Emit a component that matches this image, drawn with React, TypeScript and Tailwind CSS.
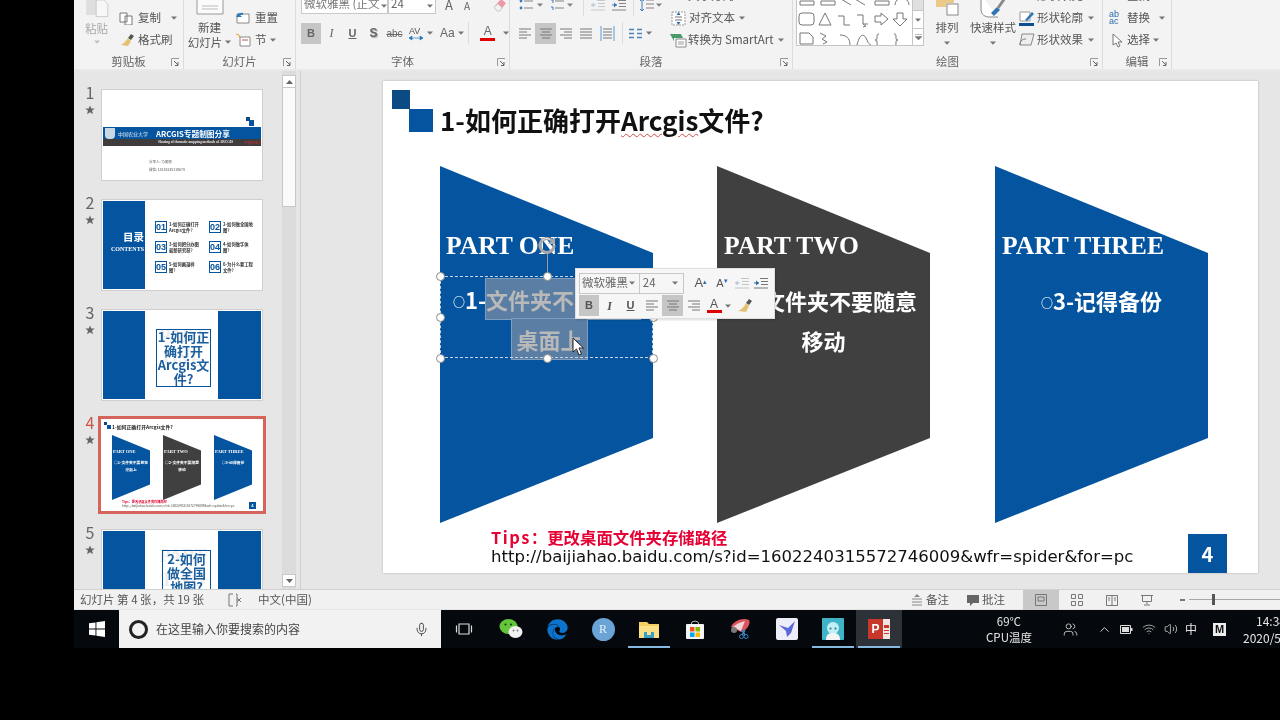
import React from "react";
import { Mic, Volume2, Wifi, ChevronUp, Users } from "lucide-react";
import { FaEdge } from "react-icons/fa";

const Caret = ({ className = "" }: { className?: string }) => (
  <svg width="6" height="4" viewBox="0 0 6 4" className={"shrink-0 " + className}><path d="M0 0.5h6L3 3.8z" fill="#777" /></svg>
);

const Expander = () => (
  <svg width="9" height="9" viewBox="0 0 9 9" className="absolute right-[3px] bottom-[2px]"><path d="M0.5 8V.5H8" fill="none" stroke="#999" /><path d="M3 3l4 4M7 4v3.5H4" fill="none" stroke="#666" /></svg>
);

const Group = ({ w, label, children }: { w: string; label: string; children: React.ReactNode }) => (
  <div className={"relative h-[69px] flex flex-col shrink-0 border-r border-[#dcdcdc] " + w}>
    <div className="h-[54px] flex items-end">{children}</div>
    <div className="h-[15px] leading-[14px] text-center text-[11.5px] text-[#666]">{label}</div>
    <Expander />
  </div>
);

const Row = ({ children, className = "" }: { children: React.ReactNode; className?: string }) => (
  <div className={"h-[22px] flex items-center text-[11.5px] text-[#555] whitespace-nowrap " + className}>{children}</div>
);

const Cell = ({ children, on, w = "w-[21px]" }: { children: React.ReactNode; on?: boolean; w?: string }) => (
  <div className={"h-[21px] flex items-center justify-center shrink-0 " + w + (on ? " bg-[#c6c6c6]" : "")}>{children}</div>
);

const Div = () => <div className="w-px h-[22px] bg-[#dcdcdc] mx-[4px] shrink-0" />;

const Lines = ({ kind }: { kind: "l" | "c" | "r" | "j" }) => {
  const rows = kind === "l" ? ["M1 2h12", "M1 5h8", "M1 8h12", "M1 11h8"] : kind === "c" ? ["M1 2h12", "M3 5h8", "M1 8h12", "M3 11h8"] : kind === "r" ? ["M1 2h12", "M5 5h8", "M1 8h12", "M5 11h8"] : ["M1 2h12", "M1 5h12", "M1 8h12", "M1 11h12"];
  return <svg width="14" height="13" viewBox="0 0 14 13"><path d={rows.join("")} stroke="#777" fill="none" /></svg>;
};

const Indent = ({ dir, blue }: { dir: "in" | "out"; blue?: boolean }) => (
  <svg width="16" height="13" viewBox="0 0 16 13">
    <path d="M7 1.5h8M8 4.5h7M8 7.5h7M1 11h14" stroke={blue ? "#777" : "#c4c4c4"} fill="none" />
    <path d={dir === "out" ? "M1 6l3-2.5v5z" : "M6 6L3 3.5v5z"} fill={blue ? "#2b6cb0" : "#b9c8d8"} />
    <path d="M1 6h5" stroke={blue ? "#2b6cb0" : "#b9c8d8"} />
  </svg>
);

const Ribbon = () => (
  <div className="h-[71px] bg-[#f3f3f3] flex shrink-0 overflow-hidden border-b-2 border-[#e9e9e9]">
    <Group w="w-[110px]" label="剪贴板">
      <div className="w-[45px] h-[54px] flex flex-col items-center justify-end pb-[6px]">
        <svg width="28" height="24" viewBox="0 0 28 24"><rect x="1" y="0" width="15" height="18" fill="#dedede" /><path d="M13 0h9l5 5v15H13z" fill="#f7f7f7" stroke="#c4c4c4" /></svg>
        <div className="text-[11.5px] text-[#a8a8a8] h-[17px] leading-[17px]">粘贴</div>
        <Caret className="opacity-40 mt-[3px] mb-[4px]" />
      </div>
      <div className="flex flex-col pb-[3px]">
        <Row>
          <svg width="14" height="13" viewBox="0 0 14 13" className="mr-[5px]"><path d="M1 1h7v9H1zM6 4h7v9H6z" fill="#fff" stroke="#777" /></svg>
          <span>复制</span><Caret className="ml-[10px]" />
        </Row>
        <Row>
          <svg width="16" height="14" viewBox="0 0 16 14" className="mr-[3px]"><path d="M9 5l3-4 3 2-3 4z" fill="#555" /><path d="M9 5l3 3-3 5-7-1c3-2 5-4 7-7z" fill="#e4c074" /></svg>
          <span>格式刷</span>
        </Row>
      </div>
    </Group>
    <Group w="w-[112px]" label="幻灯片">
      <div className="w-[51px] flex flex-col items-center pb-[2px]">
        <svg width="28" height="15" viewBox="0 0 28 15"><path d="M1 0v14h26V0" fill="#fbfbfb" stroke="#999" /><path d="M6 6h16M6 9h16" stroke="#bbb" /></svg>
        <div className="text-[11.5px] text-[#555] leading-[14px] mt-[5px] text-center">新建</div>
        <div className="text-[11.5px] text-[#555] leading-[14px] flex items-center mt-[1px]">幻灯片<Caret className="ml-[3px]" /></div>
        <div className="h-[3px]" />
      </div>
      <div className="flex flex-col pb-[3px] pl-[1px]">
        <Row>
          <svg width="15" height="14" viewBox="0 0 15 14" className="mr-[4px]"><path d="M1 3h12v9H1z" fill="#fff" stroke="#888" /><path d="M1 6a5 5 0 0 1 6-3" stroke="#2b7bb9" strokeWidth="2" fill="none" /><path d="M2 2v4h4z" fill="#2b7bb9" /></svg>
          <span>重置</span>
        </Row>
        <Row>
          <svg width="15" height="14" viewBox="0 0 15 14" className="mr-[4px]"><path d="M4 4h10v9H4z" fill="#fff" stroke="#888" /><path d="M6 7h6" stroke="#c0504d" /><path d="M0 1l3 1 1 3" stroke="#e9a23b" fill="none" /></svg>
          <span>节</span><Caret className="ml-[3px]" />
        </Row>
      </div>
    </Group>
    <Group w="w-[214px]" label="字体">
      <div className="flex flex-col pl-[5px] pb-[10px] w-full">
        <div className="h-[24px] flex items-end mb-[8px]">
          <div className="w-[87px] h-[24px] bg-white border border-[#c8c8c8] flex items-end px-[2px] pb-[1px] text-[11.5px] text-[#777] whitespace-nowrap overflow-hidden">微软雅黑 (正文<Caret className="ml-[2px] mb-[4px]" /></div>
          <div className="w-[48px] h-[24px] bg-white border border-[#c8c8c8] flex items-end justify-between px-[2px] pb-[1px] text-[11.5px] text-[#666]">24<Caret className="mb-[4px]" /></div>
          <span className="ml-[9px] mb-[2px] text-[13px] leading-[14px] text-[#666]">A</span>
          <span className="ml-[11px] mb-[2px] text-[10px] leading-[12px] text-[#666]">A</span>
          <svg width="14" height="14" viewBox="0 0 14 14" className="ml-[23px] mb-[2px]"><path d="M1 9l7-8 5 4-6 8H4z" fill="#ec9aa8" /><path d="M1 9l3 4h3l2-3-4-4z" fill="#f2f2f2" stroke="#ccc" /></svg>
        </div>
        <div className="h-[22px] flex items-center text-[#666]">
          <Cell on w="w-[20px]"><span className="text-[11px] font-bold font-['Liberation_Sans',sans-serif]">B</span></Cell>
          <Cell><span className="text-[12px] italic font-['Liberation_Serif',serif]">I</span></Cell>
          <Cell><span className="text-[11px] underline font-bold font-['Liberation_Sans',sans-serif]">U</span></Cell>
          <Cell><span className="text-[12px] font-bold [text-shadow:1px_1px_1px_#aaa] font-['Liberation_Sans',sans-serif]">S</span></Cell>
          <Cell><span className="text-[10px] line-through font-['Liberation_Sans',sans-serif]">abc</span></Cell>
          <Cell>
            <svg width="16" height="15" viewBox="0 0 16 15"><text x="1" y="8" fontSize="9" fill="#555" fontFamily="Liberation Sans">AV</text><path d="M1 12h14M1 12l3-2v4zM15 12l-3-2v4z" stroke="#2b7bb9" fill="#2b7bb9" strokeWidth="0.7" /></svg>
          </Cell>
          <Caret className="ml-[1px]" />
          <span className="ml-[7px] text-[12px] font-['Liberation_Sans',sans-serif]">Aa</span>
          <Caret className="ml-[3px]" />
          <Div />
          <div className="ml-[7px] flex flex-col items-center w-[16px]">
            <span className="text-[12px] leading-[11px] font-['Liberation_Sans',sans-serif]">A</span>
            <div className="w-[15px] h-[3px] bg-[#e00000] mt-[1px]" />
          </div>
          <Caret className="ml-[7px]" />
        </div>
      </div>
    </Group>
    <Group w="w-[283px]" label="段落">
      <div className="flex w-full items-end">
        <div className="w-[160px] pl-[5px] pb-[10px] flex flex-col shrink-0">
          <div className="h-[22px] flex items-center mb-[6px] opacity-90">
            <Cell><svg width="14" height="12" viewBox="0 0 14 12"><path d="M5 2h9M5 9h9" stroke="#777" /><circle cx="2" cy="2" r="1.4" fill="#2b6cb0" /><circle cx="2" cy="9" r="1.4" fill="#2b6cb0" /></svg></Cell>
            <Caret className="ml-[1px] mr-[5px]" />
            <Cell w="w-[18px]"><svg width="14" height="12" viewBox="0 0 14 12"><path d="M5 2h9M5 9h9" stroke="#777" /><path d="M1 1h2v3M1 8h2v3" stroke="#2b6cb0" fill="none" /></svg></Cell>
            <Caret className="ml-[1px] mr-[6px]" />
            <Div />
            <Cell w="w-[20px]"><Indent dir="out" /></Cell>
            <Cell w="w-[21px]"><Indent dir="in" blue /></Cell>
            <Div />
            <Cell w="w-[17px]"><svg width="14" height="15" viewBox="0 0 14 15"><path d="M6 2h8M6 6h8M6 10h8" stroke="#777" /><path d="M2 1v12M0 3l2-2 2 2M0 11l2 2 2-2" stroke="#2b6cb0" fill="none" /></svg></Cell>
            <Caret className="ml-[1px]" />
          </div>
          <div className="h-[22px] flex items-center">
            <Cell w="w-[20px]"><Lines kind="l" /></Cell>
            <Cell on><Lines kind="c" /></Cell>
            <Cell w="w-[20px]"><Lines kind="r" /></Cell>
            <Cell w="w-[20px]"><Lines kind="j" /></Cell>
            <Cell w="w-[22px]"><svg width="15" height="15" viewBox="0 0 15 15"><path d="M3 3h9M3 6h9M3 9h9M3 12h9" stroke="#777" /><path d="M1 0v15M14 0v15" stroke="#5b9bd5" /></svg></Cell>
            <Div />
            <Cell w="w-[17px]"><svg width="13" height="11" viewBox="0 0 13 11"><path d="M0 1.5h5M0 5.5h5M0 9.5h5M8 1.5h5M8 5.5h5M8 9.5h5" stroke="#4b82b8" strokeWidth="1.4" /></svg></Cell>
            <Caret className="ml-[2px]" />
          </div>
        </div>
        <div className="flex flex-col pb-[3px]">
          <Row><span className="ml-[18px]">文字方向</span></Row>
          <Row>
            <svg width="15" height="15" viewBox="0 0 15 15" className="mr-[3px] ml-[1px]"><path d="M1 1h13v13H1z" fill="#fff" stroke="#999" strokeDasharray="2 1" /><path d="M4 6h7M4 9h7" stroke="#777" /><path d="M7.500 1l-2 3h4zM7.500 14l-2-3h4z" fill="#2b6cb0" /></svg>
            <span>对齐文本</span><Caret className="ml-[4px]" />
          </Row>
          <Row>
            <svg width="17" height="15" viewBox="0 0 17 15" className="mr-[1px]"><path d="M0 1h11l2 4H4v3z" fill="#4a9a6a" /><path d="M6 6h10v8H6z" fill="#fff" stroke="#888" /><path d="M8 9h6M8 11h6" stroke="#999" /></svg>
            <span>转换为 SmartArt</span><Caret className="ml-[4px]" />
          </Row>
        </div>
      </div>
    </Group>
    <Group w="w-[310px]" label="绘图">
      <div className="flex w-full items-end">
        <div className="ml-[3px] mb-[8px] w-[128px] h-[60px] flex bg-white border border-[#c6c6c6] shrink-0">
          <svg width="115" height="58" viewBox="0 0 115 58" fill="none" stroke="#777">
            <g transform="translate(0 6)">
              <path d="M3 8h14v4H3zM24 8h14v4H24zM44 6l10 6M58 6l10 6M78 8h14v4H78zM98 12a6 6 0 0 1 14 0" />
              <rect x="2" y="20" width="15" height="12" rx="3" />
              <path d="M28 20l6 12H22zM41 23h6v9h6M60 22h6v9h5M66 31l3 2-3 1M78 23h6v-3l7 6-7 6v-3h-6zM100 20h6v6h4l-7 7-7-7h4z" />
              <path d="M3 40h9l4 4v7H3zM23 40l6 3-4 3 5 3-4 2M43 42c6 0 10 3 10 10M60 52c3-12 7-12 10-5 1 3 2 4 4 5M82 41c-2 0-2 1-2 4 0 2-1 2-2 2 1 0 2 0 2 2 0 3 0 4 2 4M97 41c2 0 2 1 2 4 0 2 1 2 2 2-1 0-2 0-2 2 0 3 0 4-2 4" />
            </g>
          </svg>
          <div className="flex-1 flex flex-col border-l border-[#c6c6c6]">
            <div className="h-[23px] bg-[#e0e0e0]" />
            <div className="h-[19px] border-y border-[#c6c6c6] flex items-center justify-center"><Caret /></div>
            <div className="flex-1 flex items-center justify-center"><svg width="7" height="6" viewBox="0 0 7 6"><path d="M0 .5h7M0 2.5h7L3.500 6z" fill="#777" stroke="#777" strokeWidth=".5" /></svg></div>
          </div>
        </div>
        <div className="w-[46px] flex flex-col items-center shrink-0 pb-[6px]">
          <svg width="26" height="24" viewBox="0 0 26 24"><rect x="2" y="2" width="10" height="10" fill="#ecc987" /><rect x="11" y="0" width="9" height="8" fill="#ecc987" /><rect x="13" y="9" width="11" height="11" fill="#fff" stroke="#888" /></svg>
          <div className="text-[11.5px] text-[#555] leading-[14px] mt-[1px]">排列</div>
          <Caret className="mt-[7px] mb-[3px]" />
        </div>
        <div className="w-[46px] flex flex-col items-center shrink-0 pb-[6px]">
          <svg width="30" height="24" viewBox="0 0 30 24"><path d="M3 0v14c0 6 4 8 9 8h8" fill="#fff" stroke="#888" /><path d="M13 18l6-6 3 3-6 6z" fill="#2f74b5" /><path d="M19 12l7-10 2 2-7 10z" fill="#888" /></svg>
          <div className="text-[11.5px] text-[#555] leading-[14px] mt-[1px] whitespace-nowrap">快速样式</div>
          <Caret className="mt-[7px] mb-[3px]" />
        </div>
        <div className="flex flex-col ml-[3px] pb-[3px]">
          <Row><div className="w-[15px] h-[16px] -mt-[14px] bg-[#ed7d31] mr-[3px]" /><span>形状填充</span></Row>
          <Row>
            <svg width="16" height="15" viewBox="0 0 16 15" className="mr-[2px]"><path d="M1 1h10v9H1z" fill="#fff" stroke="#999" /><path d="M6 9l7-8 2 2-7 7z" fill="#2f74b5" /><rect x="0" y="12" width="15" height="3" fill="#0a4f8f" /></svg>
            <span>形状轮廓</span><Caret className="ml-[5px]" />
          </Row>
          <Row>
            <svg width="16" height="14" viewBox="0 0 16 14" className="mr-[2px]"><path d="M3 1h12l-3 11H1z" fill="#eee" stroke="#888" /><path d="M1 12c0-4 2-6 6-6" stroke="#777" fill="none" /></svg>
            <span>形状效果</span><Caret className="ml-[5px]" />
          </Row>
        </div>
      </div>
    </Group>
    <Group w="w-[69px]" label="编辑">
      <div className="flex flex-col pb-[3px] pl-[6px]">
        <Row><span className="ml-[18px]">查找</span></Row>
        <Row>
          <span className="w-[15px] mr-[3px] text-[9px] leading-[7px] text-[#2b6cb0] font-['Liberation_Sans',sans-serif]">ab<br />ac</span>
          <span>替换</span><Caret className="ml-[9px]" />
        </Row>
        <Row>
          <svg width="11" height="15" viewBox="0 0 11 15" className="ml-[3px] mr-[4px]"><path d="M1 1v11l3-2 2 4 2-1-2-4h4z" fill="#fff" stroke="#777" /></svg>
          <span>选择</span><Caret className="ml-[3px]" />
        </Row>
      </div>
    </Group>
    <div className="flex-1" />
  </div>
);

const Star = () => (
  <svg width="10" height="10" viewBox="0 0 10 10" className="mt-[4px]"><path d="M5 .5l1.300 3H9.700L7 5.700l1 3.500L5 7.200 2 9.200l1-3.500L.3 3.500h3.400z" fill="#666" /></svg>
);

const Thumb = ({ n, active, children }: { n: number; active?: boolean; children: React.ReactNode }) => (
  <div className="h-[110px] flex shrink-0">
    <div className="w-[27px] flex flex-col items-center">
      <div className={"text-[16px] leading-[17px] mt-[-5px] ml-[5px] " + (active ? "text-[#c9564a]" : "text-[#666]")}>{n}</div>
      <div className="ml-[5px]"><Star /></div>
    </div>
    <div className={"relative w-[162px] h-[92px] bg-white overflow-hidden shrink-0 " + (active ? "outline-[3px] outline-[#d5645a]" : "border border-[#cfcfcf]")}>{children}</div>
  </div>
);

const SideBars = ({ word }: { word: string }) => (
  <>
    <div className="absolute left-px top-px bottom-px w-[42px] bg-[#05549f]" />
    <div className="absolute right-px top-px bottom-px w-[43px] bg-[#05549f]" />
    <div className="absolute left-[44px] top-[14px] w-[74px] text-center text-[18px] leading-[24px] font-bold text-[#eeeeee] font-['Liberation_Serif',serif]">PART<br />{word}</div>
  </>
);

const items = [
  { k: "01", t: "1-如何正确打开Arcgis文件?", x: "left-[53px] top-[21px]" },
  { k: "02", t: "2-如何做全国地图?", x: "left-[107px] top-[21px]" },
  { k: "03", t: "3-如何把分办图最新研究获?", x: "left-[53px] top-[41px]" },
  { k: "04", t: "4-如何做字体图?", x: "left-[107px] top-[41px]" },
  { k: "05", t: "5-如何画漫样图?", x: "left-[53px] top-[61px]" },
  { k: "06", t: "6-为什么要工程文件?", x: "left-[107px] top-[61px]" },
];

const MiniPart = ({ x, dark, title, l1, l2 }: { x: string; dark?: boolean; title: string; l1: string; l2?: string }) => (
  <div className={"absolute top-[16px] w-[38px] h-[65px] text-white [clip-path:polygon(0_0,100%_24%,100%_76%,0_100%)] " + x + (dark ? " bg-[#404040]" : " bg-[#05549f]")}>
    <div className="absolute top-[14px] left-[1px] text-[4.500px] leading-[6px] font-bold whitespace-nowrap font-['Liberation_Serif',serif]">{title}</div>
    <div className="absolute top-[24px] left-0 w-full text-center text-[3.800px] leading-[7px] font-bold whitespace-nowrap">{l1}<br />{l2}</div>
  </div>
);

const Thumbnails = () => (
  <div className="w-[208px] h-full overflow-hidden pt-[18px] shrink-0">
    <Thumb n={1}>
      <div className="absolute left-[144px] top-[27px] w-[4px] h-[4px] bg-[#0b4a82]" />
      <div className="absolute left-[147px] top-[30px] w-[5px] h-[6px] bg-[#05549f]" />
      <div className="absolute left-[1px] right-px top-[37px] h-[13px] bg-[#05549f] flex items-center">
        <div className="ml-[2px] w-[10px] h-[11px] rounded-b-[4px] bg-[#c9d6e4]" />
        <span className="ml-[3px] text-[5px] text-[#dfe8f2] whitespace-nowrap">中国农业大学</span>
        <span className="ml-[8px] text-[7.700px] font-bold text-white whitespace-nowrap">ARCGIS专题制图分享</span>
      </div>
      <div className="absolute left-[1px] right-px top-[49px] h-[7px] bg-[#403c3c] flex items-center">
        <span className="ml-[55px] text-[3.500px] font-bold text-[#e8e8e8] whitespace-nowrap font-['Liberation_Serif',serif]">Sharing of thematic mapping methods of ARCGIS</span>
        <span className="ml-[11px] text-[3.500px] text-[#d43030] whitespace-nowrap">中国农业大学</span>
      </div>
      <div className="absolute left-[47px] top-[69px] text-[3.500px] text-[#555] whitespace-nowrap">分享人: 马丽丽</div>
      <div className="absolute left-[47px] top-[77px] text-[3.500px] text-[#555] whitespace-nowrap">微信: 15116245110678</div>
    </Thumb>
    <Thumb n={2}>
      <div className="absolute left-px top-px bottom-px w-[42px] bg-[#05549f] text-white text-right">
        <div className="mt-[28px] pr-[1px] text-[10.500px] leading-[16px] font-bold">目录</div>
        <div className="pr-[1px] text-[6px] leading-[9px] font-bold font-['Liberation_Serif',serif]">CONTENTS</div>
      </div>
      {items.map((it) => (
        <div key={it.k} className={"absolute flex w-[52px] " + it.x}>
          <div className="w-[12px] h-[12px] shrink-0 border border-[#05549f] text-[9px] leading-[10px] text-center font-bold text-[#05549f] font-['Liberation_Sans',sans-serif]">{it.k}</div>
          <div className="ml-[2px] w-[30px] text-[4.300px] leading-[6px] font-bold text-[#333]">{it.t}</div>
        </div>
      ))}
    </Thumb>
    <Thumb n={3}>
      <SideBars word="ONE" />
      <div className="absolute left-[54px] top-[19px] w-[55px] h-[58px] border border-[#05549f] text-center text-[13px] leading-[14px] font-bold text-[#1c5f9e]">
        <div className="-mx-[1px]">1-如何正<br />确打开<br />Arcgis文<br />件?</div>
      </div>
    </Thumb>
    <Thumb n={4} active>
      <div className="absolute left-[3px] top-[3px] w-[3px] h-[3px] bg-[#0b4a82]" />
      <div className="absolute left-[6px] top-[6px] w-[4px] h-[4px] bg-[#05549f]" />
      <div className="absolute left-[11px] top-[4px] text-[4.900px] leading-[7px] font-bold text-[#222] whitespace-nowrap">1-如何正确打开Arcgis文件?</div>
      <MiniPart x="left-[11px]" title="PART ONE" l1="○1-文件夹不要放在" l2="桌面上" />
      <MiniPart x="left-[62px]" dark title="PART TWO" l1="○2-文件夹不要随意" l2="移动" />
      <MiniPart x="left-[113px]" title="PART THREE" l1="○3-记得备份" />
      <div className="absolute left-[21px] top-[81px] text-[3.200px] leading-[4px] font-bold text-[#e00030] whitespace-nowrap">Tips{"\uFF1A"}更改桌面文件夹存储路径</div>
      <div className="absolute left-[21px] top-[85px] text-[3.200px] leading-[4px] text-[#555] whitespace-nowrap">http://baijiahao.baidu.com/s?id=1602240315572746009&amp;wfr=spider&amp;for=pc</div>
      <div className="absolute left-[148px] top-[83px] w-[7px] h-[7px] bg-[#05549f] text-white text-[4px] leading-[7px] font-bold text-center">4</div>
    </Thumb>
    <Thumb n={5}>
      <SideBars word="TWO" />
      <div className="absolute left-[60px] top-[20px] w-[49px] h-[72px] border border-[#05549f] text-center text-[13px] leading-[14px] font-bold text-[#1c5f9e] pt-[1px]">2-如何<br />做全国<br />地图?</div>
    </Thumb>
  </div>
);

const Scrollbar = () => (
  <div className="w-[14px] h-full pt-[4px] pb-[2px] flex flex-col shrink-0 bg-[#dcdcdc]">
    <div className="h-[13px] bg-white border border-[#c8c8c8] flex items-center justify-center"><svg width="7" height="4" viewBox="0 0 7 4"><path d="M0 4h7L3.500 0z" fill="#666" /></svg></div>
    <div className="h-[119px] bg-[#fafafa] border border-[#c8c8c8] border-t-0" />
    <div className="flex-1" />
    <div className="h-[13px] bg-white border border-[#c8c8c8] flex items-center justify-center"><svg width="7" height="4" viewBox="0 0 7 4"><path d="M0 0h7L3.500 4z" fill="#666" /></svg></div>
  </div>
);

const Part = ({ x, dark }: { x: string; dark?: boolean }) => (
  <div className={"absolute top-[85px] w-[213px] h-[357px] [clip-path:polygon(0_0,100%_24.4%,100%_76.2%,0_100%)] " + x + (dark ? " bg-[#404040]" : " bg-[#05549f]")} />
);

const PartTitle = ({ x, children }: { x: string; children: React.ReactNode }) => (
  <div className={"absolute top-[150px] h-[30px] leading-[30px] text-[25.600px] font-bold text-white whitespace-nowrap font-['Liberation_Serif',serif] " + x}>{children}</div>
);

const Handle = ({ x }: { x: string }) => (
  <div className={"absolute w-[9px] h-[9px] -ml-[4.500px] -mt-[4.500px] rounded-full bg-white border border-[#8a8a8a] " + x} />
);

const Sel = ({ children, className = "" }: { children: React.ReactNode; className?: string }) => (
  <span className={"inline-block h-[40px] bg-[#5b7ea5] text-[#b9b9b9] outline outline-1 outline-[#7f9dbd] " + className}>{children}</span>
);

const Bullet = () => <span className="text-[12px] leading-[0] align-[2px]">○</span>;

const MiniToolbar = () => (
  <div className="absolute left-[192px] top-[187px] w-[200px] h-[51px] bg-[#f6f6f6] border border-[#dfdfdf] shadow-[1px_1px_2px_rgba(0,0,0,0.15)] px-[3px] pt-[3px] text-[#555]">
    <div className="h-[22px] flex items-center">
      <div className="w-[63px] h-[21px] bg-[#f6f6f6] border border-[#c8c8c8] flex items-center justify-between px-[2px] text-[11.5px] text-[#666]">微软雅黑<Caret className="mr-[2px]" /></div>
      <div className="w-[46px] h-[21px] bg-[#f6f6f6] border border-l-0 border-[#c8c8c8] flex items-center justify-between px-[3px] text-[11.5px] text-[#666]">24<Caret className="mr-[2px]" /></div>
      <span className="ml-[6px] w-[22px] text-center text-[13px] text-[#555] font-['Liberation_Sans',sans-serif]">A<sup className="text-[#2b6cb0] text-[7px]">▴</sup></span>
      <span className="w-[22px] text-center text-[11px] text-[#555] font-['Liberation_Sans',sans-serif]">A<sup className="text-[#2b6cb0] text-[7px]">▾</sup></span>
      <div className="w-[20px] flex justify-center"><Indent dir="out" /></div>
      <div className="w-[20px] flex justify-center"><Indent dir="in" blue /></div>
    </div>
    <div className="h-[23px] flex items-center">
      <Cell on w="w-[20px]"><span className="text-[11px] font-bold font-['Liberation_Sans',sans-serif]">B</span></Cell>
      <Cell><span className="text-[12px] font-bold italic font-['Liberation_Serif',serif]">I</span></Cell>
      <Cell><span className="text-[11px] font-bold underline font-['Liberation_Sans',sans-serif]">U</span></Cell>
      <Cell><Lines kind="l" /></Cell>
      <Cell on><Lines kind="c" /></Cell>
      <Cell><Lines kind="r" /></Cell>
      <div className="w-[20px] flex flex-col items-center">
        <span className="text-[12px] leading-[12px] font-['Liberation_Sans',sans-serif]">A</span>
        <div className="w-[15px] h-[3px] bg-[#e00000]" />
      </div>
      <Caret className="ml-[1px]" />
      <svg width="16" height="15" viewBox="0 0 16 15" className="ml-[6px]"><path d="M9 5l3-4 3 2-3 4z" fill="#555" /><path d="M9 5l3 3-3 6-8-1c4-2 6-4 8-8z" fill="#e4c074" /></svg>
    </div>
  </div>
);

const Slide = () => (
  <div className="relative ml-[82px] mt-[10px] w-[875px] h-[492px] bg-white shadow-[0_0_2px_rgba(0,0,0,0.25)] shrink-0">
    <div className="absolute left-[9px] top-[9px] w-[18px] h-[19px] bg-[#0b4a82]" />
    <div className="absolute left-[26px] top-[28px] w-[24px] h-[23px] bg-[#05549f]" />
    <div className="absolute left-[57px] top-[20px] h-[38px] leading-[38px] text-[26px] font-bold text-[#111] whitespace-nowrap">1-如何正确打开<span className="underline decoration-wavy decoration-1 decoration-[#d94a4a] [text-underline-offset:2px]">Arcgis</span>文件?</div>

    <Part x="left-[57px]" />
    <Part x="left-[334px]" dark />
    <Part x="left-[612px]" />

    <PartTitle x="left-[63px]">PART ONE</PartTitle>
    <PartTitle x="left-[341px]">PART TWO</PartTitle>
    <PartTitle x="left-[619px]">PART THREE</PartTitle>

    <div className="absolute left-[334px] top-[199px] w-[213px] text-center text-[22px] leading-[40px] font-bold text-white whitespace-nowrap">
      <Bullet />2-文件夹不要随意<br />移动
    </div>
    <div className="absolute left-[612px] top-[199px] w-[213px] text-center text-[22px] leading-[40px] font-bold text-white whitespace-nowrap">
      <Bullet />3-记得备份
    </div>
    <div className="absolute left-[57px] top-[198px] w-[213px] text-center text-[22px] leading-[40px] font-bold text-white whitespace-nowrap">
      <div className="h-[40px]"><Bullet />1-<Sel>文件夹不要放在</Sel></div>
      <div className="h-[40px]"><Sel className="px-[4px] ml-[6px]">桌面上</Sel></div>
    </div>

    <div className="absolute left-[57px] top-[195px] w-[213px] h-[82px] border border-dashed border-[#c8d4e2]" />
    <div className="absolute left-[163.500px] top-[172px] w-px h-[23px] bg-[#9a9a9a]" />
    <svg width="20" height="20" viewBox="0 0 20 20" className="absolute left-[154px] top-[154px]"><path d="M15 5.500A7 7 0 1 0 17 10" fill="none" stroke="#a8a8a8" strokeWidth="3" /><path d="M5 5.500a6 6 0 0 1 8-1" fill="none" stroke="#e8e8e8" strokeWidth="1" /><path d="M18 2v7h-7z" fill="#a8a8a8" /></svg>
    <Handle x="left-[57px] top-[195px]" />
    <Handle x="left-[164px] top-[195px]" />
    <Handle x="left-[270px] top-[195px]" />
    <Handle x="left-[57px] top-[236px]" />
    <Handle x="left-[270px] top-[236px]" />
    <Handle x="left-[57px] top-[277px]" />
    <Handle x="left-[164px] top-[277px]" />
    <Handle x="left-[270px] top-[277px]" />

    <svg width="12" height="19" viewBox="0 0 12 19" className="absolute left-[189px] top-[256px] z-10"><path d="M1 1v14l3.500-3 2.500 6 2.500-1-2.500-6h4.500z" fill="#fff" stroke="#222" strokeWidth="1" /></svg>
    <MiniToolbar />

    <div className="absolute left-[108px] top-[446px] h-[20px] leading-[20px] text-[16.400px] font-bold text-[#e60033] whitespace-nowrap"><span className="tracking-[1.500px]">Tips</span>{"\uFF1A"}更改桌面文件夹存储路径</div>
    <div className="absolute left-[108px] top-[465px] h-[22px] leading-[22px] text-[16.550px] text-[#111] whitespace-nowrap font-['DejaVu_Sans',sans-serif]">http://baijiahao.baidu.com/s?id=1602240315572746009&amp;wfr=spider&amp;for=pc</div>
    <div className="absolute left-[805px] top-[453px] w-[39px] h-[39px] bg-[#05549f] text-white text-[20px] font-bold leading-[39px] text-center">4</div>
  </div>
);

const StatusBar = () => (
  <div className="h-[20px] bg-[#f1f1f1] flex items-center shrink-0 text-[11.5px] text-[#555] border-b border-[#e4e4e4]">
    <span className="ml-[6px] w-[148px] whitespace-nowrap">幻灯片 第 4 张{"\uFF0C"}共 19 张</span>
    <svg width="14" height="14" viewBox="0 0 14 14" className="shrink-0"><path d="M5 1H1v12h4M8 1h1v12H8" fill="none" stroke="#777" /><path d="M9 5l4 4M13 5l-4 4" stroke="#777" /></svg>
    <span className="ml-[16px] whitespace-nowrap">中文(中国)</span>
    <div className="flex-1" />
    <svg width="12" height="13" viewBox="0 0 12 13" className="mr-[3px]"><path d="M1 6h10M1 9h10M1 12h10" stroke="#888" /><path d="M3 4l3-3 3 3z" fill="#888" /></svg>
    <span className="w-[24px]">备注</span>
    <svg width="12" height="12" viewBox="0 0 12 12" className="mr-[3px] ml-[17px]"><path d="M0 1h12v8H6L3 12V9H0z" fill="#666" /></svg>
    <span className="w-[24px] mr-[17px]">批注</span>
    <div className="w-[36px] h-[20px] bg-[#c8c8c8] flex items-center justify-center"><svg width="12" height="12" viewBox="0 0 12 12"><path d="M.5.500h11v11H.5zM3 3h6v4H3z" fill="none" stroke="#777" /></svg></div>
    <div className="w-[35px] flex justify-center"><svg width="12" height="12" viewBox="0 0 12 12"><path d="M.5.500h4v4h-4zM7.500.500h4v4h-4zM.5 7.500h4v4h-4zM7.500 7.500h4v4h-4z" fill="none" stroke="#777" /></svg></div>
    <div className="w-[35px] flex justify-center"><svg width="12" height="12" viewBox="0 0 12 12"><path d="M.5 1.500h11v10H.5zM6 1.500v10M2 4h2M2 6h2M8 4h2M8 6h2" fill="none" stroke="#777" /></svg></div>
    <div className="w-[35px] flex justify-center"><svg width="12" height="12" viewBox="0 0 12 12"><path d="M0 1.500h12M1.500 1.500v6h9v-6M6 7.500V10M3 11h6" fill="none" stroke="#777" /></svg></div>
    <div className="w-[116px] pl-[16px] flex items-center">
      <div className="w-[5px] h-[2px] bg-[#777]" />
      <div className="relative flex-1 h-px bg-[#a8a8a8] ml-[4px]">
        <div className="absolute left-[23px] -top-[5px] w-[3px] h-[11px] bg-[#555]" />
      </div>
    </div>
  </div>
);

const TaskIcon = ({ children, on, active }: { children: React.ReactNode; on?: boolean; active?: boolean }) => (
  <div className={"relative w-[46px] h-[38px] flex items-center justify-center shrink-0 " + (active ? "bg-[#2c3238]" : "")}>
    {children}
    {on && <div className="absolute bottom-0 left-[2px] right-[2px] h-[2px] bg-[#87b9e0]" />}
  </div>
);

const Taskbar = () => (
  <div className="h-[38px] bg-[#05090d] flex items-center shrink-0 text-white">
    <div className="w-[45px] flex justify-center shrink-0">
      <svg width="16" height="16" viewBox="0 0 16 16"><path d="M0 2.300L6.500 1.400V7.500H0zM7.400 1.300L16 0V7.500H7.400zM0 8.400H6.500V14.600L0 13.700zM7.400 8.400H16V16L7.400 14.700z" fill="#fff" /></svg>
    </div>
    <div className="w-[322px] h-[38px] bg-[#f2f2f2] flex items-center shrink-0 text-[#444]">
      <div className="ml-[10px] w-[19px] h-[19px] rounded-full border-[3px] border-[#222]" />
      <span className="ml-[8px] text-[12px] whitespace-nowrap">在这里输入你要搜索的内容</span>
      <div className="flex-1" />
      <Mic size={15} strokeWidth={1.500} className="mr-[12px] text-[#444]" />
    </div>
    <TaskIcon>
      <svg width="18" height="14" viewBox="0 0 18 14"><path d="M4 2h10v10H4zM1.500 3.500v7M16.500 3.500v7" fill="none" stroke="#ddd" strokeWidth="1.200" /></svg>
    </TaskIcon>
    <div className="w-[1px] shrink-0" />
    <TaskIcon>
      <svg width="24" height="22" viewBox="0 0 24 22"><ellipse cx="9.500" cy="8.500" rx="9" ry="7.500" fill="#62c53b" /><ellipse cx="16.500" cy="14" rx="7" ry="6" fill="#f1f1f1" /><circle cx="6.500" cy="6.500" r="1.100" fill="#11470a" /><circle cx="12" cy="6.500" r="1.100" fill="#11470a" /><circle cx="14.500" cy="12.500" r=".9" fill="#777" /><circle cx="18.500" cy="12.500" r=".9" fill="#777" /></svg>
    </TaskIcon>
    <TaskIcon><FaEdge size={21} className="text-[#0d72cc]" /></TaskIcon>
    <TaskIcon>
      <div className="w-[23px] h-[23px] rounded-full bg-[#6aa3d6] text-[12px] leading-[23px] text-center text-[#e8f0f8] font-['Liberation_Serif',serif]">R</div>
    </TaskIcon>
    <TaskIcon on>
      <svg width="20" height="17" viewBox="0 0 20 17"><path d="M0 1h8l2 2h10v14H0z" fill="#f3cf62" /><path d="M0 5h20v12H0z" fill="#fbe08a" /><path d="M5 11h10v6H5z" fill="#3aa0c8" /><path d="M8 11h4v3H8z" fill="#fbe08a" /></svg>
    </TaskIcon>
    <TaskIcon>
      <svg width="20" height="20" viewBox="0 0 20 20"><path d="M6 6a4 4 0 0 1 8 0" fill="none" stroke="#bbb" /><rect x="1" y="5" width="18" height="15" rx="1" fill="#f5f5f5" /><rect x="5" y="8" width="4.500" height="4.500" fill="#f25022" /><rect x="10.500" y="8" width="4.500" height="4.500" fill="#7fba00" /><rect x="5" y="13.500" width="4.500" height="4.500" fill="#00a4ef" /><rect x="10.500" y="13.500" width="4.500" height="4.500" fill="#ffb900" /></svg>
    </TaskIcon>
    <TaskIcon>
      <svg width="24" height="22" viewBox="0 0 24 22"><path d="M2 9C4 3 14-1 20 2c2 4-2 10-8 12z" fill="#d9545e" /><path d="M4 9c3-3 8-5 12-6l-4 10z" fill="#f1d6d6" /><circle cx="5" cy="12" r="3" fill="#7a7a7a" /><path d="M13 12l3 5M16 12l-3 5" stroke="#3a86c8" strokeWidth="1.500" /><circle cx="12.500" cy="18.500" r="2" fill="none" stroke="#3a86c8" /><circle cx="17" cy="18.500" r="2" fill="none" stroke="#3a86c8" /></svg>
    </TaskIcon>
    <TaskIcon>
      <svg width="22" height="22" viewBox="0 0 22 22"><rect width="22" height="22" rx="2" fill="#eeeef8" /><path d="M3 7l9 3 7-7-4 12-4 4-1-6z" fill="#5a68d8" /></svg>
    </TaskIcon>
    <TaskIcon on>
      <svg width="22" height="22" viewBox="0 0 22 22"><rect width="22" height="22" rx="1" fill="#3fb4c8" /><circle cx="11" cy="10" r="6" fill="#bff0f4" /><path d="M4 22c0-6 3-7 7-7s7 1 7 7z" fill="#f4f4f4" /><circle cx="8.500" cy="10.500" r="1" fill="#1f6d8a" /><circle cx="13.500" cy="10.500" r="1" fill="#1f6d8a" /></svg>
    </TaskIcon>
    <TaskIcon on active>
      <div className="relative w-[22px] h-[20px]">
        <div className="absolute right-0 top-0 w-[14px] h-[20px] bg-[#f3e6e2] flex flex-col items-end justify-center gap-[2px] pr-[1px]">
          <div className="w-[5px] h-[3px] bg-[#c8382a]" />
          <div className="w-[5px] h-[1px] bg-[#c8382a]" />
          <div className="w-[5px] h-[1px] bg-[#c8382a]" />
        </div>
        <div className="absolute left-0 top-0 w-[15px] h-[20px] bg-[#c8382a] text-[12px] leading-[20px] text-center font-bold text-white font-['Liberation_Sans',sans-serif]">P</div>
      </div>
    </TaskIcon>
    <div className="w-[84px] shrink-0" />
    <div className="w-[46px] text-center text-[11.500px] leading-[16px] text-[#e4e4e4] whitespace-nowrap shrink-0">69℃<br />CPU温度</div>
    <div className="w-[31px] shrink-0" />
    <Users size={15} strokeWidth={1.300} className="shrink-0 text-[#ddd]" />
    <div className="w-[19px] shrink-0" />
    <ChevronUp size={15} strokeWidth={1.500} className="shrink-0 text-[#ddd]" />
    <svg width="13" height="9" viewBox="0 0 13 9" className="ml-[8px] shrink-0"><path d="M.5.500h10v8H.5z" fill="none" stroke="#ddd" /><rect x="2" y="2" width="7" height="5" fill="#ddd" /><rect x="11" y="3" width="1.500" height="3" fill="#ddd" /></svg>
    <Wifi size={14} strokeWidth={1.300} className="ml-[9px] shrink-0 text-[#ccc]" />
    <Volume2 size={14} strokeWidth={1.300} className="ml-[8px] shrink-0 text-[#ddd]" />
    <span className="ml-[7px] text-[12px] text-[#e4e4e4] shrink-0">中</span>
    <span className="ml-[16px] w-[13px] h-[13px] bg-[#eee] text-[#111] text-[11px] leading-[13px] text-center font-bold shrink-0 font-['Liberation_Sans',sans-serif]">M</span>
    <div className="ml-[17px] text-[12px] leading-[17px] text-[#e4e4e4] whitespace-nowrap shrink-0">
      <div className="pl-[13px]">14:34</div>
      <div>2020/5/</div>
    </div>
  </div>
);

export default function App() {
  return (
    <div className="w-[1280px] h-[720px] bg-black overflow-hidden flex font-['Noto_Sans_CJK_SC','Noto_Sans',sans-serif] blur-[0.35px]">
      <div className="w-[74px] shrink-0" />
      <div className="w-[1206px] h-[648px] flex flex-col overflow-hidden">
        <Ribbon />
        <div className="flex-1 flex min-h-0 bg-[#e6e6e6] border-b border-[#d0d0d0]">
          <Thumbnails />
          <Scrollbar />
          <div className="w-[5px] border-r border-[#cfcfcf] shrink-0" />
          <Slide />
        </div>
        <StatusBar />
        <Taskbar />
      </div>
    </div>
  );
}
